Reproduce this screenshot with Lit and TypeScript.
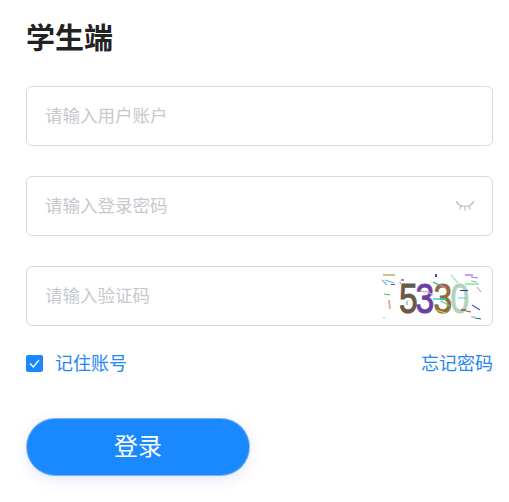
import { LitElement, html, css, svg } from "lit";
import { customElement } from "lit/decorators.js";

const noise: [string, string, number][] = [
  ["M5 7H17", "#b9b25e", 1.4],
  ["M4 12L9 17M7 12L16 15", "#62b8ee", 1.2],
  ["M13 16.5H17", "#556a80", 1],
  ["M6 26L12 27", "#50c060", 1.2],
  ["M11 32L12 41", "#f0a080", 1.8],
  ["M6 49V50.5", "#80c8f0", 1.4],
  ["M23 12H26", "#9050d0", 1.6],
  ["M22 13L23 17", "#d8d060", 1.2],
  ["M41 23L48 24", "#b9a050", 1.2],
  ["M48 23L55 27", "#e0a0d0", 1.2],
  ["M29 33V37", "#40d080", 1.2],
  ["M58 6V9", "#3030b0", 1.8],
  ["M55 14L63 18", "#50a090", 1.3],
  ["M62 17L68 20", "#e070e0", 1.3],
  ["M73 7L80 15", "#90f0c0", 1.2],
  ["M55 31H68", "#30d0d0", 1.3],
  ["M63 33L72 38", "#40d090", 1.3],
  ["M57 42L68 45", "#d8d060", 1.2],
  ["M82 22.5H90", "#3030c0", 1.2],
  ["M80 30H88", "#30e0e0", 1.2],
  ["M87 16H101", "#70f080", 1.6],
  ["M87 7H95", "#b080f0", 1.6],
  ["M93 9L100 10", "#9080e0", 1.2],
  ["M93 13L99 14", "#90b0d0", 1.2],
  ["M99 19L103 24", "#e090d0", 1.2],
  ["M83 42H88", "#303030", 1.2],
  ["M88 43L93 44", "#c04040", 1.2],
  ["M94 37L102 42", "#4060c0", 1.4],
  ["M93 49H97", "#70a8a8", 1.2],
  ["M97 50L103 51", "#306878", 1.2],
];

const digits: [string, number, string][] = [
  ["5", 21, "#695a48"],
  ["3", 37.6, "#6b3fa8"],
  ["3", 55.6, "#8f6c3c"],
  ["0", 72.6, "#b6d1ba"],
];

@customElement("app-root")
export class AppRoot extends LitElement {
  static styles = css`
    :host {
      display: block;
      width: 509px;
      height: 502px;
      background: #fff;
      font-family: "Noto Sans CJK SC", "Liberation Sans", sans-serif;
    }
    .page {
      display: flex;
      flex-direction: column;
      padding: 14px 16px 0 26px;
      box-sizing: border-box;
    }
    h1 {
      margin: 0 0 28px;
      font-size: 29px;
      line-height: 44px;
      font-weight: 700;
      color: #222;
    }
    .field {
      display: flex;
      align-items: center;
      height: 60px;
      box-sizing: border-box;
      border: 1px solid #d6d9de;
      border-radius: 6px;
      margin-bottom: 30px;
      padding-left: 18px;
      overflow: hidden;
    }
    input {
      flex: 1;
      min-width: 0;
      border: 0;
      outline: 0;
      padding: 0 0 3px;
      background: transparent;
      font: inherit;
      font-size: 17.5px;
      font-weight: 400;
      color: #333;
    }
    input::placeholder {
      color: #c6c9ce;
      opacity: 1;
    }
    .eye {
      width: 20px;
      height: 14px;
      margin-right: 17px;
    }
    .captcha {
      width: 110px;
      height: 58px;
      margin-right: 1px;
    }
    .captcha text {
      font-family: "Liberation Sans", sans-serif;
      font-size: 42px;
      stroke-width: 1;
    }
    .options {
      display: flex;
      justify-content: space-between;
      align-items: center;
      margin-top: -5px;
      font-size: 18px;
      font-weight: 400;
      line-height: 26px;
      color: #2585f8;
    }
    .remember {
      display: flex;
      align-items: center;
      gap: 12px;
    }
    .remember-text,
    a {
      margin-top: -2px;
    }
    .check {
      display: flex;
      align-items: center;
      justify-content: center;
      width: 17px;
      height: 17px;
      border-radius: 2px;
      background: #1a89ff;
    }
    .check svg {
      width: 11px;
      height: 11px;
    }
    a {
      color: inherit;
      text-decoration: none;
    }
    button {
      width: 224px;
      height: 58px;
      margin-top: 43px;
      border: 1px solid rgba(210, 210, 225, 0.55);
      border-radius: 29px;
      background: #1a89ff;
      background-origin: border-box;
      color: #fff;
      font: inherit;
      font-size: 24px;
      font-weight: 400;
      box-shadow: 0 4px 14px rgba(90, 90, 230, 0.14);
      padding: 0 0 6px;
    }
  `;

  private captcha() {
    return html`<svg class="captcha" viewBox="3 -1 110 58" aria-label="5330">
      ${digits.map(
        ([d, x, c]) =>
          svg`<text transform="translate(${x} 45) scale(.8 1)" fill=${c} stroke=${c}>${d}</text>`
      )}
      ${noise.map(
        ([d, c, w]) =>
          svg`<path d=${d} fill="none" stroke=${c} stroke-width=${w}/>`
      )}
    </svg>`;
  }

  render() {
    return html`<div class="page">
      <h1>学生端</h1>
      <div class="field"><input placeholder="请输入用户账户" /></div>
      <div class="field">
        <input placeholder="请输入登录密码" type="password" />
        <svg class="eye" viewBox="0 0 20 14" fill="none" stroke="#bcc5d3" stroke-width="1.3" stroke-linecap="round">
          <path d="M2 4C6 8.5 14 8.5 18 4" />
          <path d="M1.5 2.5L3.5 5M18.5 2.5L16.5 5M6 7L5 10M10 7.7V11M14 7L15 10" />
        </svg>
      </div>
      <div class="field">
        <input placeholder="请输入验证码" />
        ${this.captcha()}
      </div>
      <div class="options">
        <label class="remember">
          <span class="check">
            <svg viewBox="0 0 11 11" fill="none" stroke="#fff" stroke-width="1.2">
              <path d="M1 5.5L4.3 9L10 2" />
            </svg>
          </span>
          <span class="remember-text">记住账号</span>
        </label>
        <a>忘记密码</a>
      </div>
      <button>登录</button>
    </div>`;
  }
}
